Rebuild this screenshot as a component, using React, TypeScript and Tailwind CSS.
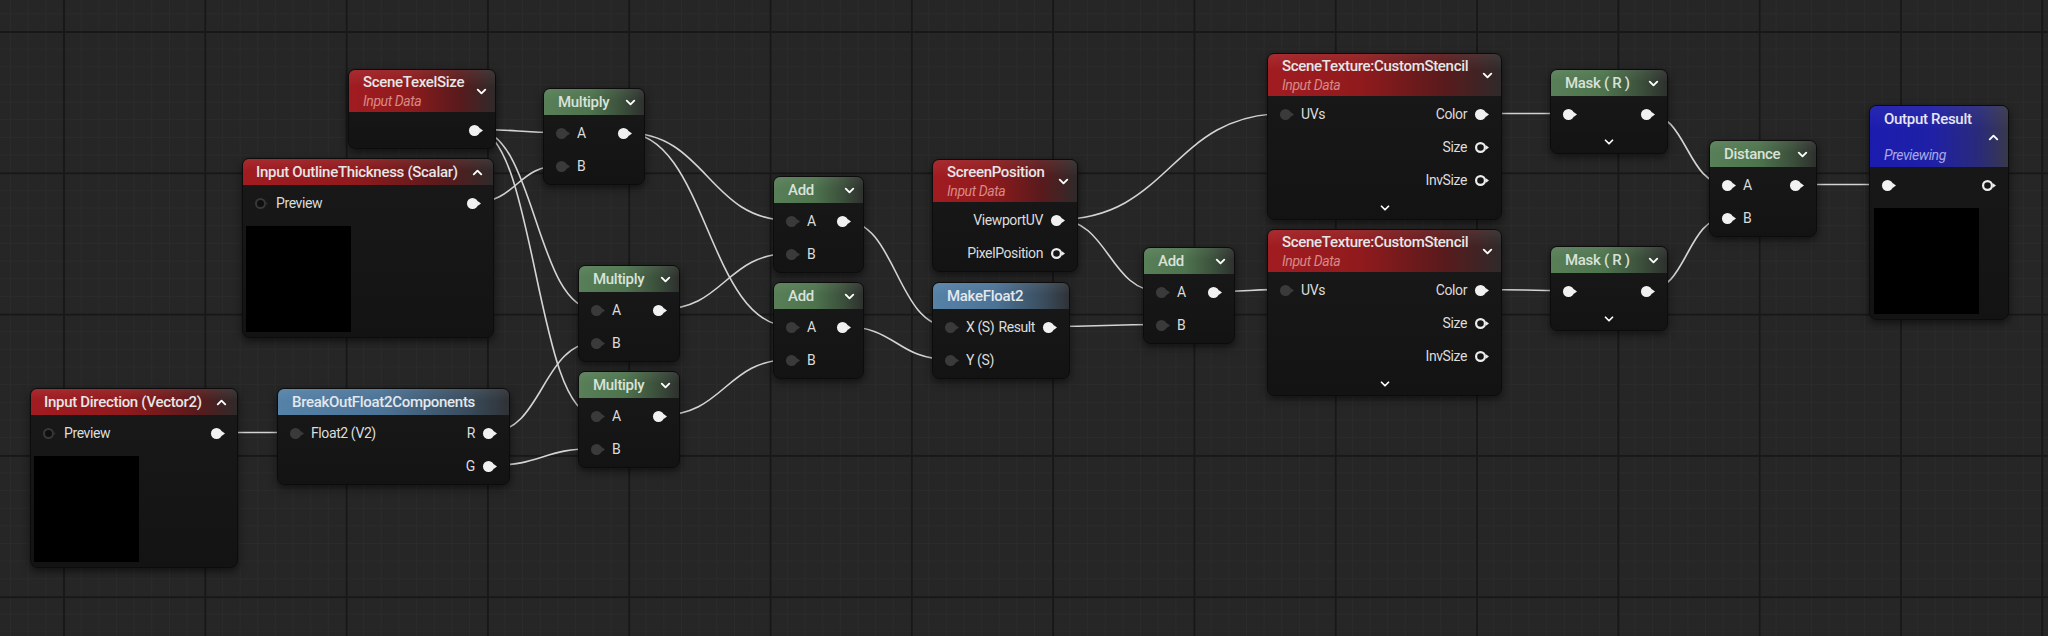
import React from 'react';
import { ChevronDown, ChevronUp } from 'lucide-react';

type PinKind = 'filled' | 'hollow' | 'dark' | 'darkRing' | 'white';
type Pin = { id: string; label?: string; kind: PinKind };
type Row = { in?: Pin; out?: Pin };
type HeaderKind = 'red' | 'redParam' | 'green' | 'blue' | 'output';
type NodeDef = {
  id: string;
  x: number;
  y: number;
  w: number;
  cls: string;
  title: string;
  header: HeaderKind;
  rows: Row[];
  preview?: 'left' | 'output';
  footer?: boolean;
};

const HEADER_H: Record<HeaderKind, number> = { red: 42, redParam: 26, green: 26, blue: 26, output: 61 };

const AB = (): Row[] => [
  { in: { id: 'A', label: 'A', kind: 'dark' }, out: { id: 'out', kind: 'filled' } },
  { in: { id: 'B', label: 'B', kind: 'dark' } },
];

const nodes: NodeDef[] = [
  { id: 'scene', x: 348, y: 69, w: 148, cls: 'left-[348px] top-[69px] w-[148px]', title: 'SceneTexelSize', header: 'red', rows: [{ out: { id: 'out', kind: 'filled' } }] },
  { id: 'outline', x: 242, y: 158, w: 252, cls: 'left-[242px] top-[158px] w-[252px]', title: 'Input OutlineThickness (Scalar)', header: 'redParam', rows: [{ in: { id: 'p', label: 'Preview', kind: 'darkRing' }, out: { id: 'out', kind: 'filled' } }], preview: 'left' },
  { id: 'mul1', x: 543, y: 88, w: 102, cls: 'left-[543px] top-[88px] w-[102px]', title: 'Multiply', header: 'green', rows: AB() },
  { id: 'mul2', x: 578, y: 265, w: 102, cls: 'left-[578px] top-[265px] w-[102px]', title: 'Multiply', header: 'green', rows: AB() },
  { id: 'mul3', x: 578, y: 371, w: 102, cls: 'left-[578px] top-[371px] w-[102px]', title: 'Multiply', header: 'green', rows: AB() },
  { id: 'dir', x: 30, y: 388, w: 208, cls: 'left-[30px] top-[388px] w-[208px]', title: 'Input Direction (Vector2)', header: 'redParam', rows: [{ in: { id: 'p', label: 'Preview', kind: 'darkRing' }, out: { id: 'out', kind: 'filled' } }], preview: 'left' },
  { id: 'brk', x: 277, y: 388, w: 233, cls: 'left-[277px] top-[388px] w-[233px]', title: 'BreakOutFloat2Components', header: 'blue', rows: [
    { in: { id: 'in', label: 'Float2 (V2)', kind: 'dark' }, out: { id: 'R', label: 'R', kind: 'filled' } },
    { out: { id: 'G', label: 'G', kind: 'filled' } },
  ] },
  { id: 'add1', x: 773, y: 176, w: 91, cls: 'left-[773px] top-[176px] w-[91px]', title: 'Add', header: 'green', rows: AB() },
  { id: 'add2', x: 773, y: 282, w: 91, cls: 'left-[773px] top-[282px] w-[91px]', title: 'Add', header: 'green', rows: AB() },
  { id: 'spos', x: 932, y: 159, w: 146, cls: 'left-[932px] top-[159px] w-[146px]', title: 'ScreenPosition', header: 'red', rows: [
    { out: { id: 'uv', label: 'ViewportUV', kind: 'filled' } },
    { out: { id: 'px', label: 'PixelPosition', kind: 'hollow' } },
  ] },
  { id: 'mk', x: 932, y: 282, w: 138, cls: 'left-[932px] top-[282px] w-[138px]', title: 'MakeFloat2', header: 'blue', rows: [
    { in: { id: 'X', label: 'X (S)', kind: 'dark' }, out: { id: 'out', label: 'Result', kind: 'filled' } },
    { in: { id: 'Y', label: 'Y (S)', kind: 'dark' } },
  ] },
  { id: 'add3', x: 1143, y: 247, w: 92, cls: 'left-[1143px] top-[247px] w-[92px]', title: 'Add', header: 'green', rows: AB() },
  { id: 'st1', x: 1267, y: 53, w: 235, cls: 'left-[1267px] top-[53px] w-[235px]', title: 'SceneTexture:CustomStencil', header: 'red', footer: true, rows: [
    { in: { id: 'uv', label: 'UVs', kind: 'dark' }, out: { id: 'color', label: 'Color', kind: 'filled' } },
    { out: { id: 'size', label: 'Size', kind: 'hollow' } },
    { out: { id: 'inv', label: 'InvSize', kind: 'hollow' } },
  ] },
  { id: 'st2', x: 1267, y: 229, w: 235, cls: 'left-[1267px] top-[229px] w-[235px]', title: 'SceneTexture:CustomStencil', header: 'red', footer: true, rows: [
    { in: { id: 'uv', label: 'UVs', kind: 'dark' }, out: { id: 'color', label: 'Color', kind: 'filled' } },
    { out: { id: 'size', label: 'Size', kind: 'hollow' } },
    { out: { id: 'inv', label: 'InvSize', kind: 'hollow' } },
  ] },
  { id: 'm1', x: 1550, y: 69, w: 118, cls: 'left-[1550px] top-[69px] w-[118px]', title: 'Mask ( R )', header: 'green', footer: true, rows: [
    { in: { id: 'in', kind: 'white' }, out: { id: 'out', kind: 'filled' } },
  ] },
  { id: 'm2', x: 1550, y: 246, w: 118, cls: 'left-[1550px] top-[246px] w-[118px]', title: 'Mask ( R )', header: 'green', footer: true, rows: [
    { in: { id: 'in', kind: 'white' }, out: { id: 'out', kind: 'filled' } },
  ] },
  { id: 'dist', x: 1709, y: 140, w: 108, cls: 'left-[1709px] top-[140px] w-[108px]', title: 'Distance', header: 'green', rows: [
    { in: { id: 'A', label: 'A', kind: 'white' }, out: { id: 'out', kind: 'filled' } },
    { in: { id: 'B', label: 'B', kind: 'white' } },
  ] },
  { id: 'out', x: 1869, y: 105, w: 140, cls: 'left-[1869px] top-[105px] w-[140px]', title: 'Output Result', header: 'output', preview: 'output', rows: [
    { in: { id: 'in', kind: 'white' }, out: { id: 'out', kind: 'hollow' } },
  ] },
];

const wires: [string, string, string, string][] = [
  ['scene', 'out', 'mul1', 'A'],
  ['scene', 'out', 'mul2', 'A'],
  ['scene', 'out', 'mul3', 'A'],
  ['outline', 'out', 'mul1', 'B'],
  ['dir', 'out', 'brk', 'in'],
  ['brk', 'R', 'mul2', 'B'],
  ['brk', 'G', 'mul3', 'B'],
  ['mul1', 'out', 'add1', 'A'],
  ['mul1', 'out', 'add2', 'A'],
  ['mul2', 'out', 'add1', 'B'],
  ['mul3', 'out', 'add2', 'B'],
  ['add1', 'out', 'mk', 'X'],
  ['add2', 'out', 'mk', 'Y'],
  ['spos', 'uv', 'st1', 'uv'],
  ['spos', 'uv', 'add3', 'A'],
  ['mk', 'out', 'add3', 'B'],
  ['add3', 'out', 'st2', 'uv'],
  ['st1', 'color', 'm1', 'in'],
  ['st2', 'color', 'm2', 'in'],
  ['m1', 'out', 'dist', 'A'],
  ['m2', 'out', 'dist', 'B'],
  ['dist', 'out', 'out', 'in'],
];

function pinPos(nodeId: string, pinId: string, side: 'in' | 'out') {
  const n = nodes.find((k) => k.id === nodeId)!;
  const idx = n.rows.findIndex((r) => (side === 'in' ? r.in?.id === pinId : r.out?.id === pinId));
  const y = n.y + HEADER_H[n.header] + 2 + 33 * idx + 16.5;
  const x = side === 'in' ? n.x + 17.5 : n.x + n.w - 20.5;
  return { x, y };
}

function PinIcon({ kind }: { kind: PinKind }) {
  if (kind === 'hollow') {
    return (
      <svg width="17" height="13" viewBox="0 0 17 13" className="shrink-0">
        <circle cx="6.5" cy="6.5" r="4.4" fill="#151515" stroke="#ececec" strokeWidth="2.2" />
        <path d="M11.6 4 L15 6.5 L11.6 9 Z" fill="#ececec" />
      </svg>
    );
  }
  if (kind === 'darkRing') {
    return (
      <svg width="17" height="13" viewBox="0 0 17 13" className="shrink-0">
        <circle cx="6.5" cy="6.5" r="4.5" fill="#0f0f0f" stroke="#383838" strokeWidth="2" />
        <path d="M11.6 4.5 L14 6.5 L11.6 8.5 Z" fill="#2a2a2a" />
      </svg>
    );
  }
  const c = kind === 'dark' ? '#3a3a3a' : '#f1f1f1';
  return (
    <svg width="17" height="13" viewBox="0 0 17 13" className="shrink-0">
      <circle cx="6.5" cy="6.5" r="5.5" fill={c} />
      <path d="M11.2 3.8 L15 6.5 L11.2 9.2 Z" fill={c} />
    </svg>
  );
}

function Header({ n }: { n: NodeDef }) {
  if (n.header === 'red') {
    return (
      <div className="relative flex h-[42px] flex-col justify-center pl-[14px] pr-[8px] bg-[linear-gradient(180deg,rgba(255,255,255,0.07)_0%,rgba(255,255,255,0)_40%),linear-gradient(90deg,#a11c21_0%,#901a1d_40%,#5a1a1c_75%,#2f2a2a_100%)]">
        <div className="text-[15px] font-medium leading-[19px] tracking-[-0.3px] text-[#e6e6e6] whitespace-nowrap">{n.title}</div>
        <div className="text-[14px] italic leading-[18px] tracking-[-0.4px] text-[#d88a84] whitespace-nowrap">Input Data</div>
        <ChevronDown size={15} strokeWidth={3} className="absolute right-[6px] top-[14px] text-white" />
      </div>
    );
  }
  if (n.header === 'redParam') {
    return (
      <div className="flex h-[26px] items-center justify-between pl-[13px] pr-[8px] bg-[linear-gradient(180deg,rgba(255,255,255,0.07)_0%,rgba(255,255,255,0)_45%),linear-gradient(90deg,#a11c21_0%,#901a1d_45%,#5a1a1c_80%,#2f2a2a_100%)]">
        <div className="text-[15px] font-medium tracking-[-0.3px] text-[#e6e6e6] whitespace-nowrap">{n.title}</div>
        <ChevronUp size={15} strokeWidth={3} className="text-white" />
      </div>
    );
  }
  if (n.header === 'green') {
    return (
      <div className="flex h-[26px] items-center justify-between pl-[14px] pr-[6px] bg-[linear-gradient(180deg,rgba(255,255,255,0.06)_0%,rgba(255,255,255,0)_45%),linear-gradient(90deg,#587f58_0%,#4e744e_45%,#3b4f3b_78%,#2e302e_100%)]">
        <div className="text-[15px] font-medium tracking-[-0.3px] text-[#d9e2d9] whitespace-nowrap">{n.title}</div>
        <ChevronDown size={15} strokeWidth={3} className="text-white" />
      </div>
    );
  }
  if (n.header === 'blue') {
    return (
      <div className="flex h-[26px] items-center pl-[14px] pr-[8px] bg-[linear-gradient(180deg,rgba(255,255,255,0.06)_0%,rgba(255,255,255,0)_45%),linear-gradient(90deg,#5682a8_0%,#4c7396_45%,#3a4c5c_82%,#2f3236_100%)]">
        <div className="text-[15px] font-medium tracking-[-0.3px] text-[#e2e8ee] whitespace-nowrap">{n.title}</div>
      </div>
    );
  }
  return (
    <div className="relative flex h-[61px] flex-col pl-[14px] pr-[7px] pt-[2px] bg-[linear-gradient(180deg,rgba(255,255,255,0.05)_0%,rgba(255,255,255,0)_40%),linear-gradient(90deg,#1b1cae_0%,#1f20a6_45%,#2a2b78_80%,#38384c_100%)]">
      <div className="h-[22px] text-[15px] font-medium leading-[22px] tracking-[-0.3px] text-[#e6e6f4] whitespace-nowrap">{n.title}</div>
      <div className="flex h-[16px] justify-end">
        <ChevronUp size={15} strokeWidth={3} className="text-white" />
      </div>
      <div className="text-[14px] italic leading-[18px] tracking-[-0.4px] text-[#a9a9e6] whitespace-nowrap">Previewing</div>
    </div>
  );
}

function NodeRow({ r }: { r: Row }) {
  return (
    <div className="flex h-[33px] items-center justify-between">
      {r.in ? (
        <div className="flex items-center gap-[5px] pl-[11px]">
          <PinIcon kind={r.in.kind} />
          {r.in.label ? <span className="text-[14px] tracking-[-0.4px] text-[#dcdcdc] whitespace-nowrap">{r.in.label}</span> : null}
        </div>
      ) : (
        <div />
      )}
      {r.out ? (
        <div className="flex items-center gap-[7px] pr-[10px]">
          {r.out.label ? <span className="text-[14px] tracking-[-0.4px] text-[#dcdcdc] whitespace-nowrap">{r.out.label}</span> : null}
          <PinIcon kind={r.out.kind} />
        </div>
      ) : null}
    </div>
  );
}

function GraphNode({ n }: { n: NodeDef }) {
  return (
    <div className={`absolute ${n.cls} overflow-hidden rounded-[7px] border border-[#0c0c0c] bg-[linear-gradient(180deg,#191919_0%,#131313_100%)] shadow-[0_3px_8px_rgba(0,0,0,0.55)]`}>
      <Header n={n} />
      <div className="pt-[2px] pb-[1px]">
        {n.rows.map((r, i) => (
          <NodeRow key={i} r={r} />
        ))}
        {n.preview === 'left' ? <div className="ml-[3px] mt-[6px] mb-[4px] h-[106px] w-[105px] bg-black" /> : null}
        {n.preview === 'output' ? <div className="ml-[4px] mt-[6px] mb-[4px] h-[106px] w-[105px] bg-black" /> : null}
        {n.footer ? (
          <div className="flex h-[21px] items-center justify-center">
            <ChevronDown size={14} strokeWidth={3} className="text-white" />
          </div>
        ) : null}
      </div>
    </div>
  );
}

export default function App() {
  return (
    <div className="relative h-[636px] w-[2048px] overflow-hidden bg-[#262626] font-['Roboto','Liberation_Sans',sans-serif] bg-[linear-gradient(90deg,#181818_0px,#181818_2px,transparent_2px),linear-gradient(180deg,#181818_0px,#181818_2px,transparent_2px),linear-gradient(90deg,#2b2b2b_0px,#2b2b2b_1px,transparent_1px),linear-gradient(180deg,#2b2b2b_0px,#2b2b2b_1px,transparent_1px)] [background-size:141.3px_141.3px,141.3px_141.3px,17.6625px_17.6625px,17.6625px_17.6625px] [background-position:63px_31px,63px_31px,63px_31px,63px_31px]">
      <svg className="pointer-events-none absolute inset-0" width="2048" height="636">
        {wires.map(([a, ap, b, bp], i) => {
          const s = pinPos(a, ap, 'out');
          const e = pinPos(b, bp, 'in');
          const c = Math.max(Math.abs(e.x - s.x) * 0.5, 24);
          const d = `M ${s.x} ${s.y} C ${s.x + c} ${s.y}, ${e.x - c} ${e.y}, ${e.x} ${e.y}`;
          return <path key={i} d={d} fill="none" stroke="#d4d4d4" strokeWidth="1.6" />;
        })}
      </svg>
      {nodes.map((n) => (
        <GraphNode key={n.id} n={n} />
      ))}
    </div>
  );
}
